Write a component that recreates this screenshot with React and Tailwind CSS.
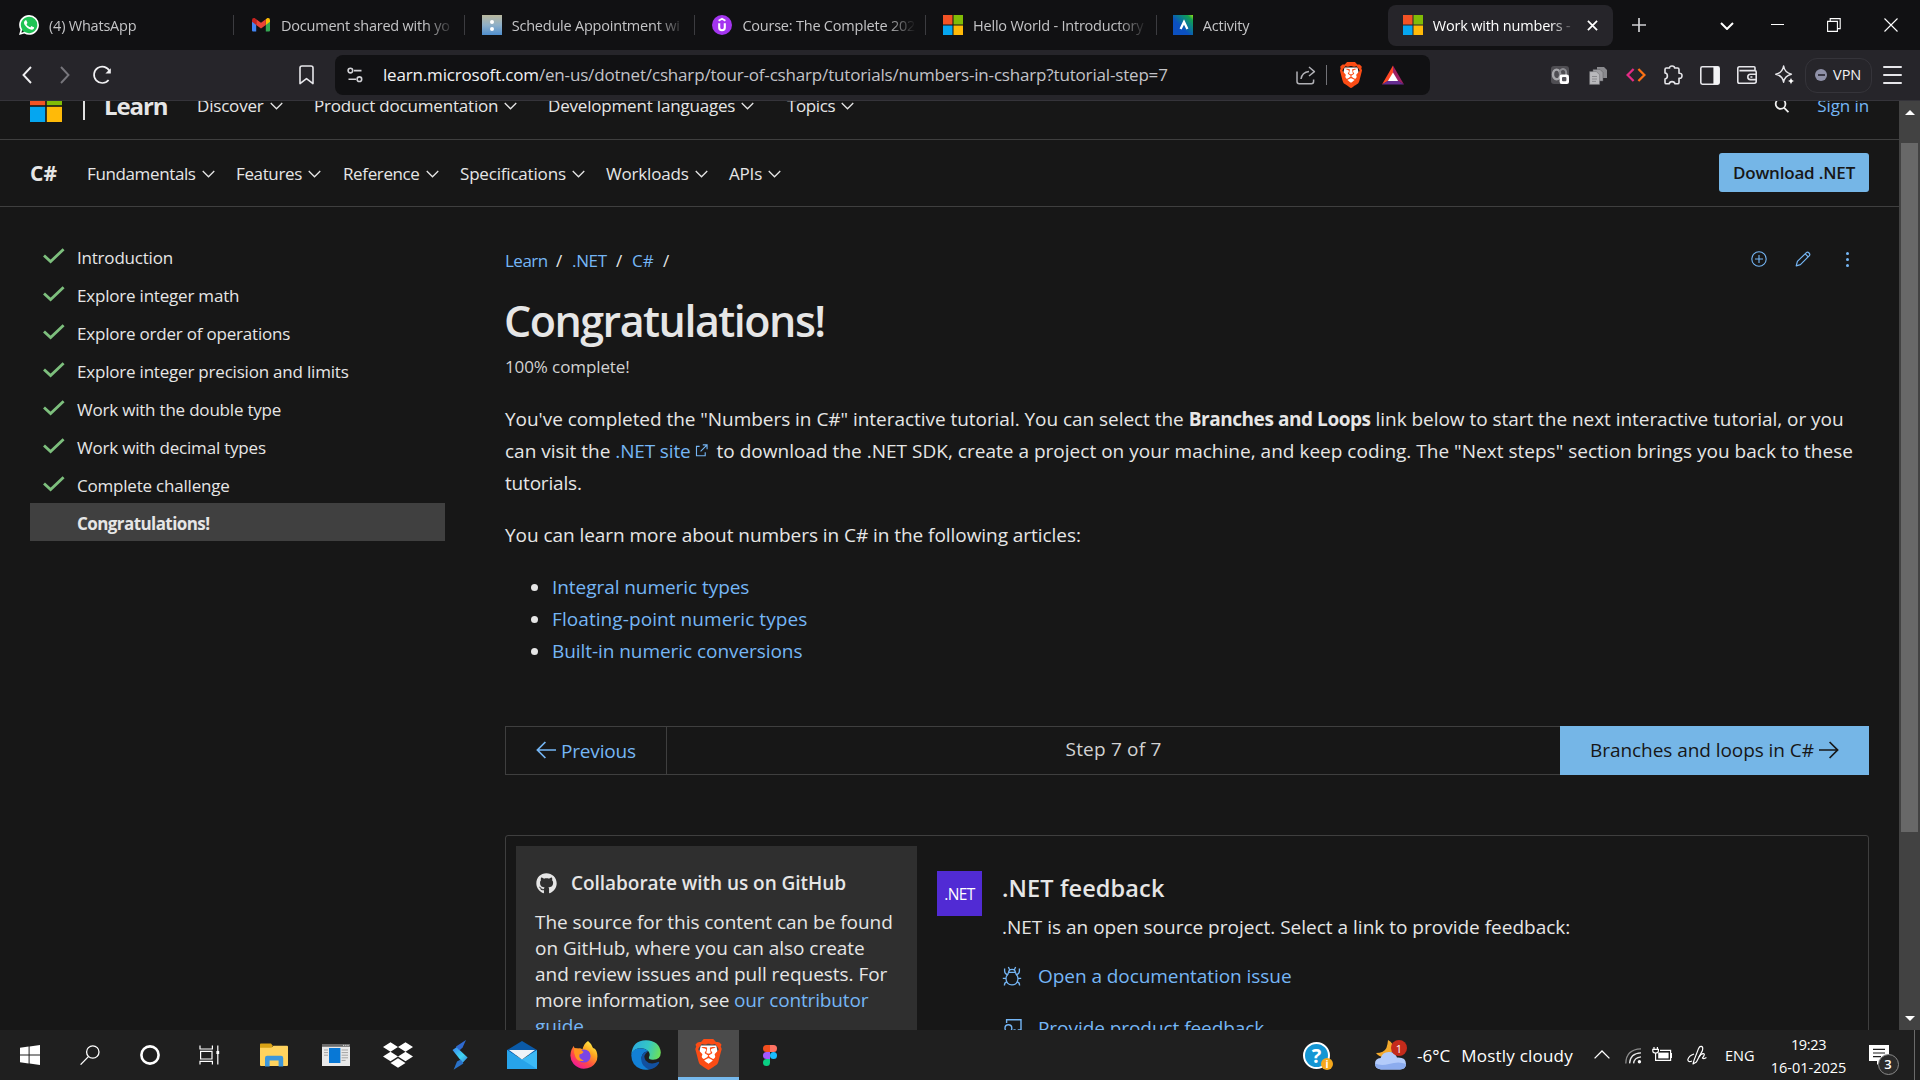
import { SiBrave, SiDropbox, SiWhatsapp } from "react-icons/si";
import { FaGithub } from "react-icons/fa";

const MsLogo = ({ className }) => (
  <svg viewBox="0 0 20 20" className={className} preserveAspectRatio="none">
    <rect x="0" y="0" width="9.5" height="9.5" fill="#f35325" />
    <rect x="10.5" y="0" width="9.5" height="9.5" fill="#81bc06" />
    <rect x="0" y="10.5" width="9.5" height="9.5" fill="#05a6f0" />
    <rect x="10.5" y="10.5" width="9.5" height="9.5" fill="#ffba08" />
  </svg>
);

const Chevron = () => (
  <svg viewBox="0 0 14 8" className="h-2 w-[13px] shrink-0" fill="none" stroke="#e6e6e6" strokeWidth="1.4">
    <path d="M0.8 0.8 L7 7 L13.2 0.8" />
  </svg>
);

const Check = () => (
  <svg viewBox="0 0 22 16" className="h-4 w-[22px]" fill="none" stroke="#7dbf7d" strokeWidth="2.8">
    <path d="M1 7.4 L7.6 13.6 L20.6 1.2" />
  </svg>
);

const WhatsAppIcon = () => (
  <span className="relative block size-5">
    <svg viewBox="0 0 20 20" className="absolute inset-0">
      <circle cx="10" cy="9.6" r="9" fill="#1fc355" />
    </svg>
    <SiWhatsapp className="absolute inset-0 size-5 text-white" />
  </span>
);

const GmailIcon = () => (
  <svg viewBox="0 0 20 20" className="size-5">
    <path d="M1 5 V15.5 Q1 16.6 2.1 16.6 H5.2 V8.5 Z" fill="#4285f4" />
    <path d="M19 5 V15.5 Q19 16.6 17.9 16.6 H14.8 V8.5 Z" fill="#34a853" />
    <path d="M14.8 4.2 L16.4 3.1 Q19 2.6 19 5.3 V6.8 L14.8 9.9 Z" fill="#fbbc04" />
    <path d="M5.2 9.9 V4.2 L10 7.8 L14.8 4.2 V9.9 L10 13.4 Z" fill="#ea4335" />
    <path d="M1 5.3 Q1 2.6 3.6 3.1 L5.2 4.2 V9.9 L1 6.8 Z" fill="#c5221f" />
  </svg>
);

const ScheduleIcon = () => (
  <span className="flex size-5 flex-col items-center justify-center gap-[3px] bg-gradient-to-b from-[#b9b79c] via-[#8fb0c8] to-[#4f8fce]">
    <i className="size-1 rounded-full bg-white" />
    <i className="size-1 rounded-full bg-white" />
  </span>
);

const UdemyIcon = () => (
  <svg viewBox="0 0 20 20" className="size-5">
    <circle cx="10" cy="10" r="10" fill="#a435f0" />
    <path d="M6.6 5.8 L10 3.8 L13.4 5.8" fill="none" stroke="#fff" strokeWidth="1.9" />
    <path d="M7.2 8.2 V12.6 Q7.2 15.3 10 15.3 Q12.8 15.3 12.8 12.6 V8.2" fill="none" stroke="#fff" strokeWidth="2.1" />
  </svg>
);

const ActivityIcon = () => (
  <svg viewBox="0 0 20 20" className="size-5">
    <defs>
      <linearGradient id="act" x1="1" y1="0" x2="0.4" y2="0.6">
        <stop offset="0" stopColor="#9be015" />
        <stop offset="0.25" stopColor="#12a150" />
        <stop offset="0.6" stopColor="#0a7e8c" />
        <stop offset="1" stopColor="#0b50c0" />
      </linearGradient>
    </defs>
    <rect width="20" height="20" fill="url(#act)" />
    <path d="M7.6 14 L11 7 L14.4 14" fill="none" stroke="#fff" strokeWidth="2.3" />
  </svg>
);

const BraveIcon = ({ className }) => (
  <span className={className}>
    <svg viewBox="0 0 24 24" className="absolute inset-0 size-full">
      <path d="M6 5 H18 L19.5 12 L16 19 L12 21.5 L8 19 L4.5 12 Z" fill="#fff" />
    </svg>
    <SiBrave className="absolute inset-0 size-full text-[#fb4c15]" />
  </span>
);

const tabs = [
  ["(4) WhatsApp", WhatsAppIcon],
  ["Document shared with yo", GmailIcon],
  ["Schedule Appointment wi", ScheduleIcon],
  ["Course: The Complete 202", UdemyIcon],
  ["Hello World - Introductory", () => <MsLogo className="size-5" />],
  ["Activity", ActivityIcon],
];

const TabStrip = () => (
  <div className="flex h-[50px] shrink-0 items-center bg-[#111113] text-[14.5px]">
    {tabs.map(([label, Icon], i) => (
      <div
        key={label}
        className={
          i === 0
            ? "flex w-[234px] shrink-0 items-center pl-[19px]"
            : i === 5
              ? "flex w-[231px] shrink-0 items-center pl-[16px]"
              : "flex w-[230.7px] shrink-0 items-center pl-[17px]"
        }
      >
        <Icon />
        <span className="mt-px ml-[10px] w-[174px] whitespace-nowrap tracking-[-0.015em] text-[#c4c4c6] [mask-image:linear-gradient(to_right,#000_83%,transparent_100%)]">
          {label}
        </span>
        {i < 5 && <i className="ml-auto h-5 w-px bg-[#3c3c40]" />}
      </div>
    ))}
    <div className="flex h-[41px] w-[225px] shrink-0 items-center rounded-lg bg-[#26252a] pl-[15px] text-white">
      <MsLogo className="size-5" />
      <span className="mt-px ml-[10px] w-[143px] whitespace-nowrap tracking-[-0.014em] [mask-image:linear-gradient(to_right,#000_82%,transparent_100%)]">
        Work with numbers -
      </span>
      <svg viewBox="0 0 12 12" className="ml-[11px] size-[11px]" stroke="#fff" strokeWidth="1.9">
        <path d="M1 1 L11 11 M11 1 L1 11" />
      </svg>
    </div>
    <svg viewBox="0 0 14 14" className="ml-[19px] size-3.5" stroke="#d0d0d3" strokeWidth="1.7">
      <path d="M7 0 V14 M0 7 H14" />
    </svg>
    <svg viewBox="0 0 14 8" className="mt-0.5 ml-[74px] h-2 w-3.5" fill="none" stroke="#fff" strokeWidth="2">
      <path d="M1 1 L7 7 L13 1" />
    </svg>
    <i className="mb-0.5 ml-[37px] h-px w-[13px] bg-white" />
    <svg viewBox="0 0 14 14" className="ml-[43px] size-[14px]" fill="none" stroke="#fff" strokeWidth="1.1">
      <path d="M0.6 3.4 H10.4 V13.4 H0.6 Z M3.2 3.4 V0.6 H13.2 V10.6 H10.4" />
    </svg>
    <svg viewBox="0 0 14 14" className="ml-[43px] size-[14px]" stroke="#fff" strokeWidth="1.1">
      <path d="M0.5 0.5 L13.5 13.5 M13.5 0.5 L0.5 13.5" />
    </svg>
  </div>
);

const Toolbar = () => (
  <div className="flex h-[51px] shrink-0 items-center border-b border-[#35343a] bg-[#26252a]">
    <svg viewBox="0 0 10 18" className="ml-[22px] h-[18px] w-2.5" fill="none" stroke="#f0f0f2" strokeWidth="1.9">
      <path d="M9 1 L1.5 9 L9 17" />
    </svg>
    <svg viewBox="0 0 10 18" className="ml-[28px] h-[18px] w-2.5" fill="none" stroke="#77767c" strokeWidth="1.9">
      <path d="M1 1 L8.5 9 L1 17" />
    </svg>
    <svg viewBox="0 0 20 20" className="ml-[22px] size-5" fill="none" stroke="#f0f0f2" strokeWidth="1.7">
      <path d="M16.6 15 A8.2 8.2 0 1 1 17.6 6.2" />
      <path d="M18.8 3.2 V8.6 H13.4 Z" fill="#f0f0f2" stroke="none" />
    </svg>
    <svg viewBox="0 0 15 20" className="ml-[187px] h-5 w-[15px]" fill="none" stroke="#e6e6ea" strokeWidth="1.6" strokeLinejoin="round">
      <path d="M1 18.6 V3 Q1 1 3 1 H12 Q14 1 14 3 V18.6 L7.5 13.6 Z" />
    </svg>
    <div className="ml-[21px] flex h-10 w-[1095px] items-center rounded-lg bg-[#111113]">
      <svg viewBox="0 0 16 16" className="ml-3 size-4" fill="none" stroke="#d2d2d6" strokeWidth="1.6">
        <circle cx="3.4" cy="3.6" r="2.3" />
        <path d="M7 3.6 H14.5 M1.5 12.2 H9" />
        <circle cx="12.4" cy="12.2" r="2.3" />
      </svg>
      <span className="ml-5 text-[17px] tracking-[-0.01em] whitespace-nowrap text-[#c3c3c8]">
        <span className="text-[#f2f2f4]">learn.microsoft.com</span>
        /en-us/dotnet/csharp/tour-of-csharp/tutorials/numbers-in-csharp?tutorial-step=7
      </span>
      <svg viewBox="0 0 20 20" className="ml-auto size-5" fill="none" stroke="#b0b0b5" strokeWidth="1.5" strokeLinejoin="round">
        <path d="M1 6.5 V16.5 Q1 18.7 3.2 18.7 H15.4 Q17.6 18.7 17.6 16.5 V14.4" />
        <path d="M5 14 Q6 7 13 6.4 M13 2 L18.4 6.6 L13 11" />
      </svg>
      <i className="ml-[10px] h-5 w-px bg-[#727277]" />
      <BraveIcon className="relative ml-[11px] block size-[26px]" />
      <svg viewBox="0 0 22 20" className="mr-[26px] ml-[18px] h-5 w-[22px]">
        <path d="M11 0.5 L0 19.5 L11 13 Z" fill="#ff4724" />
        <path d="M11 0.5 L22 19.5 L11 13 Z" fill="#9e1f63" />
        <path d="M0 19.5 H22 L11 12.6 Z" fill="#662d91" />
        <path d="M11 7.6 L5.9 16 H16.1 Z" fill="#fff" />
      </svg>
    </div>
    <svg viewBox="0 0 18 18" className="ml-[121px] size-[18px]">
      <rect width="18" height="18" rx="3" fill="#4f4e53" />
      <ellipse cx="5.6" cy="8.4" rx="3.6" ry="4.8" fill="none" stroke="#a6a6aa" strokeWidth="2.4" />
      <ellipse cx="12" cy="7" rx="3.2" ry="4" fill="none" stroke="#8d8d92" strokeWidth="2" />
      <rect x="8.6" y="8.6" width="9.4" height="9.4" rx="2.2" fill="#fff" />
      <rect x="11" y="11" width="4.4" height="4.2" rx="1" fill="#55545a" />
    </svg>
    <svg viewBox="0 0 19 19" className="ml-5 size-[19px]">
      <path d="M8 1 H15 L18 4 V12 H8 Z" fill="#8a8a8e" />
      <path d="M4 3.4 H11 L14 6.4 V15 H4 Z" fill="#9d9da1" stroke="#5a5a5e" strokeWidth="0.5" />
      <path d="M0.6 5.6 H7.4 L10.6 8.8 V18.4 H0.6 Z" fill="#b9b9bc" stroke="#66666a" strokeWidth="0.5" />
      <path d="M3 10.5 H8 M3 13 H8 M3 15.4 H7" stroke="#8a8a8e" strokeWidth="1" />
    </svg>
    <svg viewBox="0 0 20 14" className="ml-[18px] h-3.5 w-5" fill="none" strokeWidth="2.3">
      <path d="M7.6 1 L1.6 7 L7.6 13" stroke="#e32b85" />
      <path d="M12.4 1 L18.4 7 L12.4 13" stroke="#fb7215" />
    </svg>
    <svg viewBox="0 0 20 20" className="ml-[17px] size-5" fill="none" stroke="#e6e6ea" strokeWidth="1.6" strokeLinejoin="round">
      <path d="M2 4.4 Q2 3 3.4 3 H6.6 Q6.4 1 9 1 Q11.6 1 11.6 3 H14.6 Q16 3 16 4.4 V8.2 Q19 8 19 10.8 Q19 13.6 16 13.2 V17.4 Q16 18.8 14.6 18.8 H12 Q11.6 16.6 9 16.6 Q6.6 16.6 6.2 18.8 H3.4 Q2 18.8 2 17.4 V14 Q4.4 13.6 4.4 11 Q4.4 8.2 2 8 Z" />
    </svg>
    <svg viewBox="0 0 20 19" className="ml-[17px] h-[19px] w-5">
      <rect x="0.8" y="0.8" width="18.4" height="17.4" rx="1.6" fill="none" stroke="#e6e6ea" strokeWidth="1.6" />
      <path d="M13.4 0.8 H18 Q19.2 0.8 19.2 2 V17 Q19.2 18.2 18 18.2 H13.4 Z" fill="#f4f4f6" />
    </svg>
    <svg viewBox="0 0 20 18" className="ml-[17px] h-[18px] w-5" fill="none" stroke="#e6e6ea" strokeWidth="1.6">
      <path d="M18 4.6 V1.8 Q18 0.8 17 0.8 H2.4 Q0.8 0.8 0.8 2.6 V15.4 Q0.8 17.2 2.4 17.2 H17.4 Q19.2 17.2 19.2 15.6 V6 Q19.2 4.6 17.8 4.6 H2.4" />
      <path d="M19.2 8.2 H13.4 Q10.8 8.2 10.8 11 Q10.8 13.6 13.4 13.6 H19.2 M13.4 11 H15.4" />
    </svg>
    <svg viewBox="0 0 20 20" className="ml-[18px] size-5" fill="none" stroke="#e6e6ea" strokeWidth="1.5" strokeLinejoin="round">
      <path d="M8.6 1 Q9.6 7.6 16.4 9.2 Q9.6 10.8 8.6 17.2 Q7.6 10.8 0.8 9.2 Q7.6 7.6 8.6 1 Z" />
      <path d="M16 12.4 Q16.4 15.6 19.6 16 Q16.4 16.4 16 19.6 Q15.6 16.4 12.4 16 Q15.6 15.6 16 12.4 Z" fill="#fff" stroke="none" />
    </svg>
    <div className="ml-[10px] flex h-[35px] w-[67px] items-center rounded-xl border border-[#35343a] pl-[9px]">
      <span className="flex size-3 items-center justify-center rounded-full bg-[#8f91a8]">
        <i className="h-0.5 w-[7px] bg-[#3a3946]" />
      </span>
      <span className="ml-1.5 text-[14.5px] text-[#f2f2f4]">VPN</span>
    </div>
    <span className="ml-[11px] flex w-[19px] flex-col gap-[6px]">
      <i className="h-0.5 rounded bg-[#e6e6ea]" />
      <i className="h-0.5 rounded bg-[#e6e6ea]" />
      <i className="h-0.5 rounded bg-[#e6e6ea]" />
    </span>
  </div>
);

const NavItem = ({ label, className }) => (
  <a className={className}>
    {label}
    <Chevron />
  </a>
);

const steps = [
  "Introduction",
  "Explore integer math",
  "Explore order of operations",
  "Explore integer precision and limits",
  "Work with the double type",
  "Work with decimal types",
  "Complete challenge",
];

const item = "flex shrink-0 items-center gap-[6px] tracking-[-0.011em] ";
const tightItem = "flex shrink-0 items-center gap-[6px] tracking-[-0.022em] ";

const Page = () => (
  <div className="flex min-h-0 flex-1 overflow-hidden bg-[#171717] text-[#e6e6e6]">
    <div className="flex w-[1899px] shrink-0 flex-col overflow-hidden">
      <header className="-mt-[29px] flex h-[68px] shrink-0 items-center border-b border-[#3f3f3f] text-[17px]">
        <MsLogo className="mt-px ml-[30px] size-8" />
        <i className="ml-[21px] h-[29px] w-0.5 bg-[#e0e0e0]" />
        <span className="ml-[19px] w-[93px] text-[24px] font-bold tracking-[-0.045em]">Learn</span>
        <NavItem label="Discover" className={item + "w-[117px]"} />
        <NavItem label="Product documentation" className={item + "w-[234px]"} />
        <NavItem label="Development languages" className={item + "w-[239px]"} />
        <NavItem label="Topics" className={tightItem + "w-[90px]"} />
        <svg viewBox="0 0 16 16" className="mb-px ml-auto size-[15px]" fill="none" stroke="#f0f0f0" strokeWidth="1.9">
          <circle cx="7" cy="6.4" r="5.2" />
          <path d="M10.6 10.2 L15.4 15.2" />
        </svg>
        <a className="mr-[30px] ml-[28px] tracking-[-0.005em] text-[#75b6f5]">Sign in</a>
      </header>

      <nav className="flex h-[67px] shrink-0 items-center border-b border-[#3f3f3f] text-[17px]">
        <span className="mt-0.5 ml-[30px] w-[57px] text-[21px] font-bold">C#</span>
        <div className="flex pt-0.5">
          <NavItem label="Fundamentals" className={tightItem + "w-[149px]"} />
          <NavItem label="Features" className={tightItem + "w-[107px]"} />
          <NavItem label="Reference" className={tightItem + "w-[117px]"} />
          <NavItem label="Specifications" className={item + "w-[146px]"} />
          <NavItem label="Workloads" className={item + "w-[123px]"} />
          <NavItem label="APIs" className={item + "w-[60px]"} />
        </div>
        <button className="mr-[30px] mb-px ml-auto h-[39px] w-[150px] rounded-[3px] bg-[#75b6e7] pt-px font-semibold tracking-[-0.011em] text-[#171717]">
          Download .NET
        </button>
      </nav>

      <div className="flex">
        <aside className="ml-[30px] w-[415px] shrink-0 pt-[30px] text-[17px] tracking-[-0.012em]">
          {steps.map((s) => (
            <div key={s} className="flex h-[38px] items-center pt-[3px]">
              <span className="w-[47px] pb-[3px] pl-[13px]">
                <Check />
              </span>
              {s}
            </div>
          ))}
          <div className="flex h-[38px] items-center bg-[#404040] pt-[3px] pl-[47px] font-bold tracking-[-0.034em]">
            Congratulations!
          </div>
        </aside>

        <main className="ml-[60px] w-[1364px] shrink-0 pt-[38px] text-[19px] leading-8">
          <div className="flex h-[30px] items-center text-[17px]">
            <div className="flex pt-0.5">
              <a className="w-[51px] tracking-[-0.03em] text-[#75b6f5]">Learn</a>
              <span className="w-[16px]">/</span>
              <a className="w-[44px] tracking-[-0.02em] text-[#75b6f5]">.NET</a>
              <span className="w-[16px]">/</span>
              <a className="w-[31px] text-[#75b6f5]">C#</a>
              <span>/</span>
            </div>
            <svg viewBox="0 0 16 16" className="mb-0.5 ml-auto size-4" fill="none" stroke="#75b6f5" strokeWidth="1.1">
              <circle cx="8" cy="8" r="7.2" />
              <path d="M8 4 V12 M4 8 H12" />
            </svg>
            <svg viewBox="0 0 16 16" className="mb-0.5 ml-[28px] size-4" fill="none" stroke="#75b6f5" strokeWidth="1.2" strokeLinejoin="round">
              <path d="M1.2 14.8 L2.4 10.4 L11.4 1.6 Q12.6 0.6 14 2 Q15.4 3.4 14.4 4.6 L5.4 13.6 Z M10.2 2.8 L13.2 5.8" />
            </svg>
            <span className="mr-[19px] mb-px ml-[35px] flex w-1 flex-col gap-[3px]">
              <i className="size-[3px] rounded-full bg-[#75b6f5]" />
              <i className="size-[3px] rounded-full bg-[#75b6f5]" />
              <i className="size-[3px] rounded-full bg-[#75b6f5]" />
            </span>
          </div>

          <h1 className="mt-[18px] -ml-px text-[43px] leading-[56px] font-semibold tracking-[-0.035em]">Congratulations!</h1>
          <p className="mt-[4px] text-[17px] leading-[27px] tracking-[-0.006em] text-[#d2d2d2]">100% complete!</p>

          <div className="mt-[23px] whitespace-nowrap">
            <p className="tracking-[-0.0022em]">
              You've completed the "Numbers in C#" interactive tutorial. You can select the{" "}
              <b className="font-bold tracking-[-0.023em]">Branches and Loops</b> link below to start the next interactive tutorial, or you
            </p>
            <p className="tracking-[0.0008em]">
              can visit the{" "}
              <a className="tracking-[-0.008em] text-[#75b6f5]">
                .NET site
                <svg viewBox="0 0 14 14" className="mb-[5px] ml-1 inline size-[13px]" fill="none" stroke="#75b6f5" strokeWidth="1.2">
                  <path d="M5 2.6 H1.6 V12.6 H11 V9 M8.4 1 H13 V5.6 M13 1 L6 8" />
                </svg>
              </a>
              <span className="ml-[9px]">
                to download the .NET SDK, create a project on your machine, and keep coding. The "Next steps" section brings you back to these
              </span>
            </p>
            <p className="tracking-[-0.01em]">tutorials.</p>
          </div>
          <p className="mt-5 tracking-[-0.0028em]">You can learn more about numbers in C# in the following articles:</p>
          <ul className="mt-5 text-[#75b6f5]">
            <li className="flex items-center pl-[26px] tracking-[-0.003em]">
              <i className="mr-[14px] size-[7px] rounded-full bg-[#e6e6e6]" />
              Integral numeric types
            </li>
            <li className="flex items-center pl-[26px] tracking-[0.004em]">
              <i className="mr-[14px] size-[7px] rounded-full bg-[#e6e6e6]" />
              Floating-point numeric types
            </li>
            <li className="flex items-center pl-[26px] tracking-[-0.003em]">
              <i className="mr-[14px] size-[7px] rounded-full bg-[#e6e6e6]" />
              Built-in numeric conversions
            </li>
          </ul>

          <div className="mt-[59px] flex h-[49px] border border-[#3f3f3f]">
            <a className="flex w-[161px] items-center border-r border-[#3f3f3f] pl-[30px] tracking-[-0.009em] text-[#75b6f5]">
              <svg viewBox="0 0 20 18" className="mr-[5px] mb-0.5 h-[18px] w-5" fill="none" stroke="#75b6f5" strokeWidth="1.7">
                <path d="M20 9 H1.4 M9.4 1 L1.4 9 L9.4 17" />
              </svg>
              Previous
            </a>
            <span className="flex flex-1 items-center justify-center pb-[3px] tracking-[0.01em] text-[#d2d2d2]">Step 7 of 7</span>
            <a className="-my-px -mr-px flex w-[309px] items-center bg-[#75b6e7] pb-0.5 pl-[30px] tracking-[-0.003em] text-[#171717]">
              Branches and loops in C#
              <svg viewBox="0 0 20 18" className="ml-[5px] h-[18px] w-5" fill="none" stroke="#171717" strokeWidth="1.7">
                <path d="M0 9 H18.6 M10.6 1 L18.6 9 L10.6 17" />
              </svg>
            </a>
          </div>

          <section className="mt-[60px] flex h-[300px] rounded-[3px] border border-[#3f3f3f] pt-[10px] pl-[10px]">
            <div className="w-[401px] bg-[#2f2f2f] px-5 pt-[24px] leading-[26px]">
              <h2 className="flex items-center text-[19px] font-semibold tracking-[-0.002em]">
                <FaGithub className="mr-[14px] size-[21px]" />
                Collaborate with us on GitHub
              </h2>
              <p className="mt-[13px] -ml-px whitespace-nowrap tracking-[-0.002em]">
                The source for this content can be found
                <br />
                on GitHub, where you can also create
                <br />
                and review issues and pull requests. For
                <br />
                <span className="tracking-[-0.008em]">
                  more information, see <a className="text-[#75b6f5]">our contributor</a>
                </span>
                <br />
                <a className="text-[#75b6f5]">guide</a>.
              </p>
            </div>
            <div className="mt-[25px] ml-5 flex size-[45px] items-center justify-center bg-[#512bd4] text-[15.5px] font-medium tracking-[-0.04em] text-white">
              .NET
            </div>
            <div className="ml-5">
              <h2 className="mt-[25px] text-[23.5px] leading-[34px] font-semibold tracking-[0.005em]">.NET feedback</h2>
              <p className="mt-[5px] leading-[34px]">
                .NET is an open source project. Select a link to provide feedback:
              </p>
              <a className="mt-4 flex items-center tracking-[-0.003em] text-[#75b6f5]">
                <svg viewBox="0 0 20 20" className="mr-4 size-5" fill="none" stroke="#75b6f5" strokeWidth="1.3">
                  <path d="M6 8 Q6 6.4 7.4 6.4 H12.6 Q14 6.4 14 8 Q16 10 16 13 Q15.4 18.8 10 18.8 Q4.6 18.8 4 13 Q4 10 6 8 Z" />
                  <path d="M6.6 6.4 Q6.8 3.4 10 3.4 Q13.2 3.4 13.4 6.4 M7.6 3.8 L6.4 1 M12.4 3.8 L13.6 1" />
                  <path d="M5.6 8.6 Q2.6 8 2.6 5 V2.6 M14.4 8.6 Q17.4 8 17.4 5 V2.6 M4 12.4 H0.8 M16 12.4 H19.2 M4.8 16 Q2.4 16.4 2.4 19.4 M15.2 16 Q17.6 16.4 17.6 19.4" />
                </svg>
                Open a documentation issue
              </a>
              <a className="mt-5 flex items-center tracking-[-0.003em] text-[#75b6f5]">
                <svg viewBox="0 0 20 20" className="mr-4 size-5" fill="none" stroke="#75b6f5" strokeWidth="1.4">
                  <path d="M4.6 5 V1.7 H19 V12 H16.4 V15.2 L13 12 H11.4" />
                  <circle cx="6.4" cy="10.2" r="3.4" />
                  <path d="M0.8 19.4 Q1 14.6 6.4 14.6 Q11.8 14.6 12 19.4" />
                </svg>
                Provide product feedback
              </a>
            </div>
          </section>
        </main>
      </div>
    </div>

    <div className="flex flex-1 flex-col items-center bg-[#424242]">
      <i className="mt-[9px] h-0 w-0 border-x-[5px] border-b-[5px] border-x-transparent border-b-white" />
      <i className="mt-[28px] h-[689px] w-[17px] bg-[#686868]" />
      <i className="mt-auto mb-[9px] h-0 w-0 border-x-[5px] border-t-[5px] border-x-transparent border-t-white" />
    </div>
  </div>
);

const Cell = ({ children }) => <div className="flex h-full w-[62px] shrink-0 items-center justify-center">{children}</div>;

const Taskbar = () => (
  <div className="flex h-[50px] shrink-0 items-center bg-[#1f1f1f] text-white">
    <div className="flex w-[243px] shrink-0 items-center">
      <svg viewBox="0 0 20 20" className="ml-5 size-5" fill="#fff">
        <path d="M0 2.8 L8.6 1.6 V9.5 H0 Z M9.6 1.4 L20 0 V9.5 H9.6 Z M0 10.5 H8.6 V18.4 L0 17.2 Z M9.6 10.5 H20 V20 L9.6 18.6 Z" />
      </svg>
      <svg viewBox="0 0 20 20" className="ml-10 size-5" fill="none" stroke="#fff" strokeWidth="1.3">
        <circle cx="12.8" cy="7" r="6.2" />
        <path d="M8.4 11.6 L0.6 19.6" />
      </svg>
      <svg viewBox="0 0 20 20" className="ml-10 size-5" fill="none" stroke="#fff" strokeWidth="2.6">
        <circle cx="10" cy="10" r="8.6" />
      </svg>
      <svg viewBox="0 0 21 20" className="ml-[39px] h-5 w-[21px]" fill="none" stroke="#fff" strokeWidth="1.2">
        <path d="M1 0.5 V4 H13.4 V0.5 M1.6 6.4 H13 V14 H1.6 Z M1 19.5 V16.4 H13.4 V19.5 M18.8 0.5 V19.5" />
        <rect x="17.4" y="6" width="2.8" height="3" fill="#fff" stroke="none" />
      </svg>
    </div>

    <Cell>
      <svg viewBox="0 0 28 24" className="h-6 w-7">
        <path d="M0 1.4 Q0 0.6 0.8 0.6 H11 L13.2 3.2 H0 Z M0 3 H12 V5 H0 Z" fill="#d9a215" />
        <path d="M0 4.8 H11.4 L13.4 2.8 H27 Q28 2.8 28 3.8 V22 Q28 23 27 23 H1 Q0 23 0 22 Z" fill="#ffd35e" />
        <path d="M5 23.6 V15 Q5 12.8 7.2 12.8 H21 Q23.2 12.8 23.2 15 V23.6 H18.6 V17.4 H9.6 V23.6 Z" fill="#3c97dc" />
      </svg>
    </Cell>
    <Cell>
      <svg viewBox="0 0 28 22" className="h-[22px] w-7">
        <rect width="28" height="22" fill="#e9e9e9" />
        <rect width="28" height="2.8" fill="#6b6b6b" />
        <path d="M21 1.4 H26.6" stroke="#ddd" strokeWidth="1" strokeDasharray="1.2 1" />
        <rect x="7" y="4" width="11.4" height="15" fill="#0878d6" />
        <path d="M2 6 H6 M2 8.6 H6 M2 11.2 H6 M19.6 6 H26 M19.6 8.6 H26 M19.6 11.2 H26 M19.6 13.8 H26 M19.6 16.4 H23.6" stroke="#a3a3a3" strokeWidth="1" />
      </svg>
    </Cell>
    <Cell>
      <SiDropbox className="size-[30px]" />
    </Cell>
    <Cell>
      <svg viewBox="0 0 16 30" className="h-[30px] w-4">
        <defs>
          <linearGradient id="bolt" x1="0" y1="0" x2="0.8" y2="1">
            <stop offset="0" stopColor="#3a7bf0" />
            <stop offset="0.65" stopColor="#3fd6f2" />
            <stop offset="1" stopColor="#3b8fe0" />
          </linearGradient>
        </defs>
        <path d="M0.5 10 L7 5.4 L7.6 10 L15.6 17.6 L10 23.6 L8.4 20 Z" fill="url(#bolt)" />
        <path d="M14 0 L4 6.6 L7.4 10.4 L10.6 7.6 Z" fill="#2f6ad0" />
        <path d="M1.6 29.8 L5 21.6 L8.8 19.6 L11.4 23.4 Z" fill="#2a72c8" />
      </svg>
    </Cell>
    <Cell>
      <svg viewBox="0 0 30 28" className="h-7 w-[30px]">
        <path d="M0 9 L15 0 L30 9 V14 H0 Z" fill="#0a5aa8" />
        <path d="M0 9 L30 28 H0 Z" fill="#1b8fe0" />
        <path d="M30 9 L0 28 H30 Z" fill="#3cb9f5" />
        <path d="M0 9 L15 18.5 L30 28 H0 Z" fill="#27a3ea" />
        <path d="M2 9 H28 L15 18.5 Z" fill="#eef3f8" />
      </svg>
    </Cell>
    <Cell>
      <svg viewBox="0 0 30 30" className="size-[30px]">
        <defs>
          <linearGradient id="fx" x1="0.85" y1="0.05" x2="0.25" y2="0.95">
            <stop offset="0" stopColor="#fff24a" />
            <stop offset="0.35" stopColor="#ffa51f" />
            <stop offset="0.7" stopColor="#ff4a46" />
            <stop offset="1" stopColor="#f0179b" />
          </linearGradient>
        </defs>
        <path d="M19 1 Q23 4 24 8 Q27 8.6 28 13 Q30 22 22 27 Q12 31.6 4.6 24 Q-0.6 17.6 2.6 9.6 L4.6 6 L6 9 L9.4 8.4 Q12 8 13.4 9.6 Q15 3.4 19 1 Z" fill="url(#fx)" />
        <circle cx="15" cy="16" r="6.6" fill="#7b45e6" />
        <path d="M5 8 Q11 8 14.6 12 Q13 14.4 10.4 14.6 Q9.6 19 15 20.4 Q9 22.6 6.4 17 Q4.6 12.6 5 8 Z" fill="#ff9420" />
      </svg>
    </Cell>
    <Cell>
      <svg viewBox="0 0 30 30" className="size-[30px]">
        <defs>
          <linearGradient id="eg" x1="0" y1="0.3" x2="1" y2="0.5">
            <stop offset="0" stopColor="#2aa9e0" />
            <stop offset="0.55" stopColor="#35c7c4" />
            <stop offset="1" stopColor="#6be05a" />
          </linearGradient>
        </defs>
        <path d="M0.4 14 Q1.6 0.4 15 0.2 Q28.6 0.6 29.8 12.4 Q29.6 19.6 22 19.8 Q17 19.6 18 17 Q19.6 15 17.6 11.6 Q14 7.4 7 8.4 Q2.4 9.6 0.4 14 Z" fill="url(#eg)" />
        <path d="M0.3 15.4 Q0.6 9 8.4 8.2 Q14.6 8 17.2 11.2 Q12 11.4 10.6 17 Q10 25.6 18.4 29.2 Q14 30.6 9.4 28.8 Q0.6 25 0.3 15.4 Z" fill="#1280d6" />
        <path d="M17 11.4 Q11.4 15 14.6 20.4 Q19 25.6 27.6 21.8 Q28.6 22 28 23.2 Q24.6 28.6 18.4 29.4 Q9.6 26.6 10.4 17.6 Q11.6 11.4 17 11.4 Z" fill="#12509f" />
      </svg>
    </Cell>
    <div className="ml-px flex h-full w-[61px] shrink-0 items-center justify-center border-b-[3px] border-[#76b9ed] bg-[#4b4b4b]">
      <BraveIcon className="relative mt-0.5 block size-[31px]" />
    </div>
    <Cell>
      <svg viewBox="0 0 14 21" className="h-[21px] w-3.5">
        <path d="M3.5 0 H7 V7 H3.5 A3.5 3.5 0 0 1 3.5 0 Z" fill="#f24e1e" />
        <path d="M7 0 H10.5 A3.5 3.5 0 0 1 10.5 7 H7 Z" fill="#ff7262" />
        <path d="M3.5 7 H7 V14 H3.5 A3.5 3.5 0 0 1 3.5 7 Z" fill="#a259ff" />
        <circle cx="10.5" cy="10.5" r="3.5" fill="#1abcfe" />
        <path d="M3.5 14 H7 V17.5 A3.5 3.5 0 1 1 3.5 14 Z" fill="#0acf83" />
      </svg>
    </Cell>

    <span className="relative mt-0.5 ml-[502px] block size-[28px] shrink-0">
      <span className="flex size-[27px] items-center justify-center rounded-full border-2 border-white bg-[#1496d4] text-[20px] leading-none font-bold">?</span>
      <span className="absolute -right-0.5 bottom-0 flex size-3 items-center justify-center rounded-full bg-[#f5a81c] text-[10px] leading-none font-bold">i</span>
    </span>
    <span className="relative ml-[44px] block h-[30px] w-[32px] shrink-0">
      <svg viewBox="0 0 32 30" className="h-[30px] w-8">
        <path d="M13 0 Q19 3 18 9 Q16 16 9 17 Q4 17 1 13 Q9 13 11.4 8 Q12.8 4 13 0 Z" fill="#f3a92c" />
        <path d="M6 29.4 Q0 29 0 23.6 Q0 18.6 5.6 18 Q7.6 11.6 14.4 12 Q20.4 12 22 17.6 Q31 17 31 24 Q31 29.4 25 29.4 Z" fill="#b3cbfa" />
        <path d="M6 29.4 Q0 29 0 23.6 Q6 26 14 24 Q24 21 31 24 Q31 29.4 25 29.4 Z" fill="#8cacee" />
      </svg>
      <span className="absolute top-0 right-0 flex size-4 items-center justify-center rounded-full bg-[#c42b1c] text-[11px] leading-none">1</span>
    </span>
    <span className="mt-px ml-[10px] text-[17px] whitespace-nowrap">-6°C</span>
    <span className="mt-px ml-[11px] text-[17px] tracking-[0.013em] whitespace-nowrap">Mostly cloudy</span>
    <svg viewBox="0 0 16 9" className="mb-0.5 ml-[21px] h-[9px] w-4 shrink-0" fill="none" stroke="#fff" strokeWidth="1.3">
      <path d="M0.6 8.4 L8 1 L15.4 8.4" />
    </svg>
    <svg viewBox="0 0 17 16" className="mt-0.5 ml-[15px] h-4 w-[17px] shrink-0" fill="none" strokeWidth="1.3">
      <path d="M0.8 15.4 Q1 1.4 16 0.8" stroke="#8c8c8c" />
      <path d="M4.6 15.4 Q5 5.4 16 4.8 M8.6 15.4 Q9 9.6 16 8.8" stroke="#e8e8e8" />
      <circle cx="14.4" cy="13.8" r="1.7" fill="#fff" />
    </svg>
    <svg viewBox="0 0 21 16" className="ml-[10px] h-4 w-[21px] shrink-0" fill="none" stroke="#fff" strokeWidth="1.2">
      <path d="M2 0 V2 M5.4 0 V2 M0.8 2.4 H6.4 V4 Q6.4 6 3.6 6 Q0.8 6 0.8 4 Z M3.6 6 V13.4 H18.6 V3.4 H8 M19.4 6 V11" />
      <rect x="6.2" y="5.6" width="10.4" height="5.8" fill="#fff" stroke="none" />
    </svg>
    <svg viewBox="0 0 20 20" className="ml-[14px] size-5 shrink-0" fill="none" stroke="#fff" strokeWidth="1.2" strokeLinejoin="round">
      <path d="M7 15.4 L6 19 L9.4 17 L15.4 5.6 Q16.4 2 14.4 1.4 Q12.6 1 11.6 3.4 Z" />
      <path d="M7 9 Q2 10.6 0.8 14.6 Q0.8 17.6 5 16 M12 12 Q14 8.4 16.4 8.6 Q18.6 9 15.4 13 Q17 14.4 19.4 12.6" />
    </svg>
    <span className="mt-px ml-[18px] text-[14.5px]">ENG</span>
    <span className="mt-px ml-[16px] flex w-[76px] flex-col items-center text-[14.5px] leading-[23px] whitespace-nowrap">
      <span className="tracking-[-0.025em]">19:23</span>
      <span>16-01-2025</span>
    </span>
    <span className="relative ml-[22px] block h-[36px] w-[32px] shrink-0">
      <svg viewBox="0 0 20 20" className="mt-2 size-5">
        <path d="M0 0 H20 V16 H12 L8 20 V16 H0 Z" fill="#fff" />
        <path d="M4 4.4 H16 M4 8 H16 M4 11.6 H12" stroke="#1f1f1f" strokeWidth="1.2" />
      </svg>
      <span className="absolute right-0.5 -bottom-0.5 flex size-[21px] items-center justify-center rounded-full border border-[#8a8a8a] bg-[#2b2b2b] text-[13px] leading-none font-semibold">
        3
      </span>
    </span>
    <i className="ml-auto h-full w-px shrink-0 bg-[#6a6a6a]" />
    <i className="w-[5px] shrink-0" />
  </div>
);

export default function App() {
  return (
    <div className="flex h-[1080px] w-[1920px] flex-col overflow-hidden bg-[#171717] font-['Open_Sans','Noto_Sans',sans-serif]">
      <TabStrip />
      <Toolbar />
      <Page />
      <Taskbar />
    </div>
  );
}
